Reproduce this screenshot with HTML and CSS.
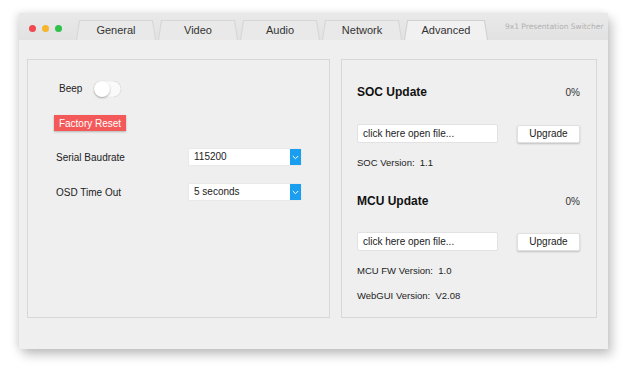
FILE: index.html
```html
<!DOCTYPE html>
<html>
<head>
<meta charset="utf-8">
<link rel="stylesheet" href="styles.css">
</head>
<body>
<div class="window">
  <div class="titlebar">
    <div class="lights">
      <span class="light red"></span>
      <span class="light yellow"></span>
      <span class="light green"></span>
    </div>
    <div class="tabs">
      <div class="tab"><span>General</span></div>
      <div class="tab"><span>Video</span></div>
      <div class="tab"><span>Audio</span></div>
      <div class="tab"><span>Network</span></div>
      <div class="tab active"><span>Advanced</span></div>
    </div>
    <div class="product">9x1 Presentation Switcher</div>
  </div>
  <div class="content">
    <div class="panel left">
      <div class="row beep">
        <span class="label">Beep</span>
        <span class="toggle"><span class="knob"></span></span>
      </div>
      <button class="reset">Factory Reset</button>
      <div class="row field baud">
        <span class="flabel">Serial Baudrate</span>
        <span class="select"><span class="val">115200</span><span class="arrow"><svg width="7" height="5" viewBox="0 0 7 5"><path d="M0.8 1 L3.5 3.7 L6.2 1" fill="none" stroke="#fff" stroke-width="1"/></svg></span></span>
      </div>
      <div class="row field osd">
        <span class="flabel">OSD Time Out</span>
        <span class="select"><span class="val">5 seconds</span><span class="arrow"><svg width="7" height="5" viewBox="0 0 7 5"><path d="M0.8 1 L3.5 3.7 L6.2 1" fill="none" stroke="#fff" stroke-width="1"/></svg></span></span>
      </div>
    </div>
    <div class="panel right">
      <div class="head soc"><span class="title">SOC Update</span><span class="pct">0%</span></div>
      <div class="uprow first"><span class="file">click here open file...</span><button class="up">Upgrade</button></div>
      <div class="info">SOC Version:&nbsp; 1.1</div>
      <div class="head mcu"><span class="title">MCU Update</span><span class="pct">0%</span></div>
      <div class="uprow second"><span class="file">click here open file...</span><button class="up">Upgrade</button></div>
      <div class="info fw">MCU FW Version:&nbsp; 1.0</div>
      <div class="info web">WebGUI Version:&nbsp; V2.08</div>
    </div>
  </div>
</div>
</body>
</html>
```
FILE: styles.css
```css
html, body {
  margin: 0;
  padding: 0;
  background: #ffffff;
  width: 626px;
  height: 368px;
  overflow: hidden;
  font-family: "Liberation Sans", Arial, sans-serif;
  color: #222;
}
body {
  padding: 13px 0 0 19px;
  box-sizing: border-box;
}
.window {
  width: 589px;
  height: 336px;
  background: #efefef;
  box-shadow: 4px 6px 10px rgba(0,0,0,0.22), -3px 0 8px rgba(0,0,0,0.1);
  display: flex;
  flex-direction: column;
}
.titlebar {
  height: 27px;
  background: linear-gradient(#e9e9e9, #e2e2e2);
  display: flex;
  align-items: flex-end;
  position: relative;
}
.lights {
  display: flex;
  gap: 6px;
  padding: 0 0 8px 10px;
  width: 47px;
}
.light {
  width: 7px;
  height: 7px;
  border-radius: 50%;
}
.red { background: #f2484f; }
.yellow { background: #f7b52c; }
.green { background: #2fc24a; }
.tabs {
  display: flex;
  gap: 2px;
}
.tab {
  width: 80px;
  height: 20px;
  background: #d6d6d6;
  clip-path: polygon(3px 0, calc(100% - 3px) 0, 100% 100%, 0 100%);
  position: relative;
}
.tab span {
  position: absolute;
  inset: 1px 1px 0 1px;
  background: #e9e9e9;
  clip-path: polygon(3px 0, calc(100% - 3px) 0, 100% 100%, 0 100%);
  display: flex;
  align-items: center;
  justify-content: center;
  font-size: 11px;
  color: #333;
  padding-bottom: 1px;
}
.tab.active {
  width: 84px;
  background: #d0d0d0;
}
.tab.active span {
  background: #f1f1f1;
}
.product {
  font-family: "DejaVu Sans", sans-serif;
  font-size: 7.5px;
  color: #b0b0b0;
  padding: 0 0 9px 17px;
}
.content {
  flex: 1;
  display: flex;
  gap: 11px;
  padding: 19px 11px 31px 8px;
}
.panel {
  border: 1px solid #d7d7d7;
  box-sizing: border-box;
  height: 259px;
  background: #efefef;
}
.panel.left {
  width: 303px;
  padding: 20px 0 0 0;
  display: flex;
  flex-direction: column;
  align-items: flex-start;
}
.panel.right {
  width: 256px;
  padding: 0 16px 0 15px;
}
.row {
  display: flex;
  align-items: center;
}
.beep {
  padding-left: 31px;
  height: 17px;
}
.label {
  font-size: 10px;
  width: 35px;
}
.toggle {
  width: 27px;
  height: 16px;
  border-radius: 8px;
  background: #fafafa;
  box-shadow: 0 0 1px rgba(0,0,0,0.25) inset, 0 0 1px rgba(0,0,0,0.1);
  position: relative;
}
.knob {
  position: absolute;
  left: 0;
  top: 0;
  width: 16px;
  height: 16px;
  border-radius: 50%;
  background: #fff;
  box-shadow: 0 1px 2px rgba(0,0,0,0.3);
}
.reset {
  margin: 18px 0 0 26px;
  width: 72px;
  height: 16px;
  padding: 0;
  border: none;
  background: #f4595a;
  color: #fff;
  font-family: "Liberation Sans", Arial, sans-serif;
  font-size: 10px;
  box-shadow: 0 1px 2px rgba(0,0,0,0.25);
}
.field {
  padding-left: 28px;
  height: 16px;
}
.baud { margin-top: 18px; }
.osd { margin-top: 19px; }
.flabel {
  font-size: 10px;
  width: 133px;
}
.select {
  width: 112px;
  height: 16px;
  background: #fff;
  display: flex;
  box-shadow: 0 0 1px rgba(0,0,0,0.15);
}
.val {
  flex: 1;
  font-size: 10px;
  padding-left: 5px;
  line-height: 16px;
}
.arrow {
  width: 11px;
  background: #1a9ef0;
  display: flex;
  align-items: center;
  justify-content: center;
}
.head {
  display: flex;
  justify-content: space-between;
  align-items: center;
  height: 16px;
}
.head.soc { margin-top: 24px; }
.head.mcu { margin-top: 24px; }
.title {
  font-weight: bold;
  font-size: 12px;
  color: #111;
}
.pct {
  font-size: 10px;
  color: #333;
}
.uprow {
  display: flex;
  justify-content: space-between;
  align-items: center;
  height: 19px;
}
.uprow.first { margin-top: 24px; }
.uprow.second { margin-top: 23px; }
.file {
  width: 141px;
  height: 19px;
  box-sizing: border-box;
  background: #fff;
  border: 1px solid #e2e2e2;
  border-radius: 2px;
  font-size: 10px;
  line-height: 17px;
  padding-left: 5px;
  color: #222;
}
.up {
  width: 63px;
  height: 18px;
  padding: 0;
  border: 1px solid #e0e0e0;
  background: #fff;
  border-radius: 2px;
  box-shadow: 0 1px 2px rgba(0,0,0,0.2);
  font-family: "Liberation Sans", Arial, sans-serif;
  font-size: 10px;
  color: #222;
}
.info {
  font-size: 9.5px;
  color: #222;
  margin-top: 14px;
  height: 12px;
  line-height: 12px;
}
.info.fw { margin-top: 14px; }
.info.web { margin-top: 13px; }
```
